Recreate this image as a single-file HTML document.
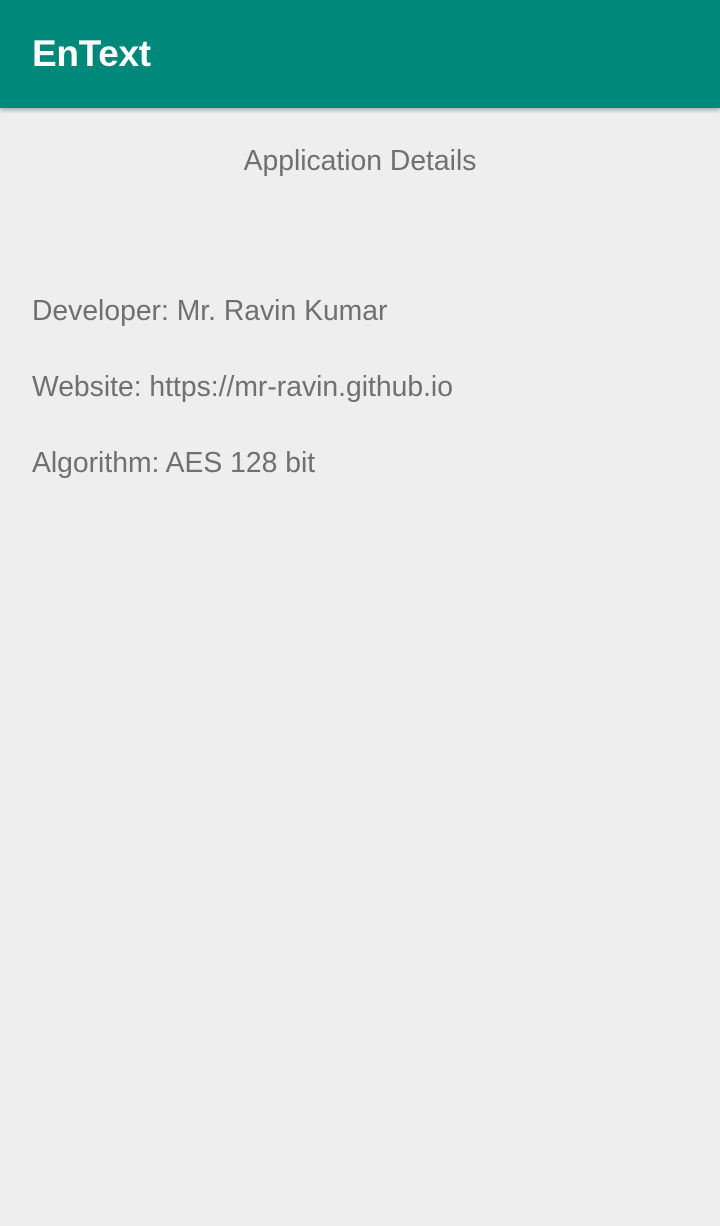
<!DOCTYPE html>
<html><head><style>
body{margin:0;width:720px;height:1226px;background:#eeeeee;font-family:"Liberation Sans",sans-serif;position:relative;overflow:hidden}
.bar{position:absolute;top:0;left:0;width:720px;height:108px;background:#00897b;box-shadow:0 2px 4px rgba(0,0,0,0.3)}
.bar span{position:absolute;left:32px;top:31px;color:#fff;font-size:37px;font-weight:bold;line-height:46px;letter-spacing:-0.3px}
.t{position:absolute;color:#707070;font-size:28.3px;line-height:32px}
</style></head><body>
<div class="bar"><span>EnText</span></div>
<div class="t" style="left:0;width:720px;text-align:center;top:144px">Application Details</div>
<div class="t" style="left:32px;top:294px">Developer: Mr. Ravin Kumar</div>
<div class="t" style="left:32px;top:370px">Website: https://mr-ravin.github.io</div>
<div class="t" style="left:32px;top:446px">Algorithm: AES 128 bit</div>
</body></html>
